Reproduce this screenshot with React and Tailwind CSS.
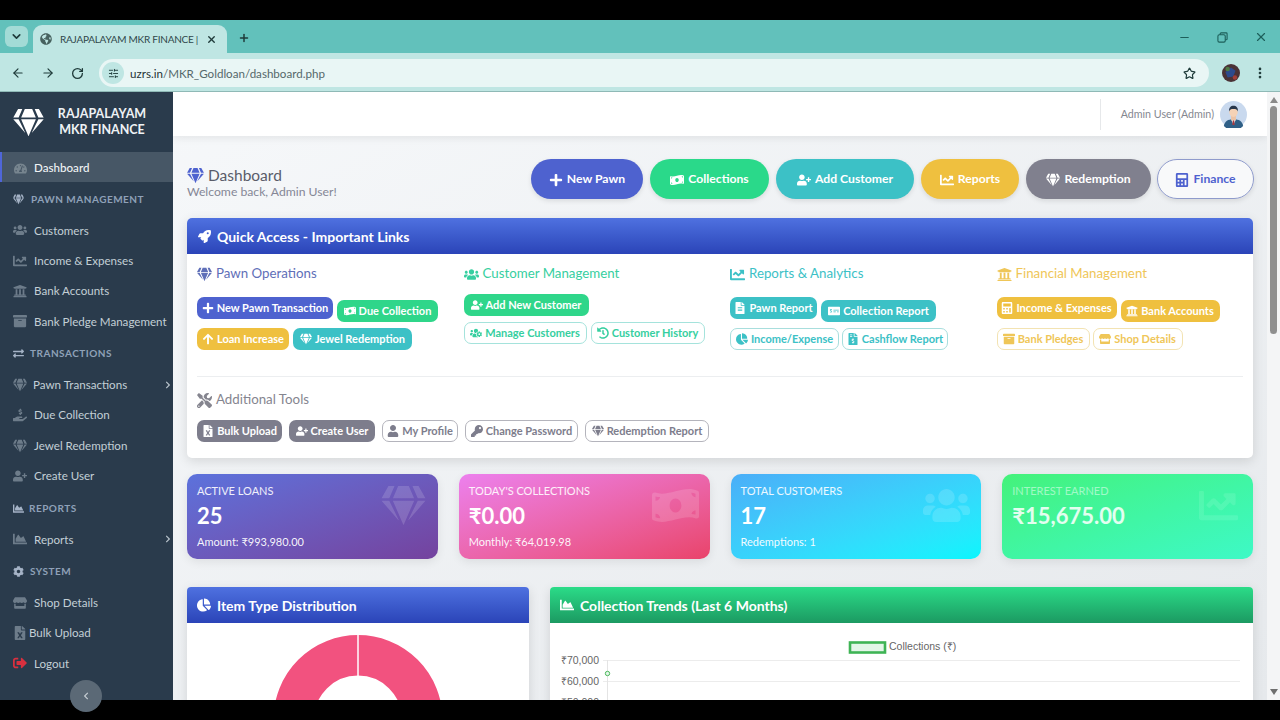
import {
  FaArchive, FaArrowUp, FaCalculator, FaChartArea, FaChartLine, FaChartPie, FaChevronLeft, FaChevronRight,
  FaCog, FaExchangeAlt, FaFileAlt, FaFileExcel, FaFileInvoiceDollar, FaGem, FaGlobeAmericas, FaHandHoldingUsd,
  FaHistory, FaKey, FaMoneyBillWave, FaMoneyCheckAlt, FaPlus, FaRocket, FaSignOutAlt, FaStore, FaTachometerAlt,
  FaTools, FaUniversity, FaUser, FaUserPlus, FaUsers, FaUsersCog,
} from "react-icons/fa";
import { ArrowLeft, ArrowRight, ChevronDown, EllipsisVertical, Minus, Plus, RotateCw, SlidersHorizontal, Star, X } from "lucide-react";

const NAV = [
  { label: "Customers", icon: FaUsers },
  { label: "Income & Expenses", icon: FaChartLine },
  { label: "Bank Accounts", icon: FaUniversity },
  { label: "Bank Pledge Management", icon: FaArchive },
];

const TOP_BUTTONS = [
  { label: "New Pawn", icon: FaPlus, cls: "w-[112px] bg-[#4e62cf] text-white" },
  { label: "Collections", icon: FaMoneyBillWave, cls: "w-[119px] bg-[#2ad98a] text-white" },
  { label: "Add Customer", icon: FaUserPlus, cls: "w-[138px] bg-[#3cc1c6] text-white" },
  { label: "Reports", icon: FaChartLine, cls: "w-[98px] bg-[#efc03f] text-white" },
  { label: "Redemption", icon: FaGem, cls: "w-[125px] bg-[#80808e] text-white" },
  { label: "Finance", icon: FaCalculator, cls: "-ml-[1px] w-[97px] border border-[#8f9bcc] bg-white/60 text-[#4e62cf]" },
];

const PRIMARY = "bg-[#4e62cf] text-white";
const SUCCESS = "bg-[#2fd68a] text-white";
const INFO = "bg-[#3cc1c6] text-white";
const WARNING = "bg-[#efc03f] text-white";
const SECONDARY = "bg-[#7d7d8c] text-white";
const OUT_SUCCESS = "border border-[#a5e3dc] text-[#36cfa0] bg-white";
const OUT_INFO = "border border-[#a8dedd] text-[#3cc1c6] bg-white";
const OUT_WARNING = "border border-[#f3e3b2] text-[#efc658] bg-white";
const OUT_GREY = "border border-[#b4b4bc] text-[#7d7d8c] bg-white";

function Sidebar() {
  return (
    <aside className="relative w-[173px] shrink-0 whitespace-nowrap bg-[#2a3b4c] text-[11.6px] text-[#c3cfd6]">
      <div className="flex h-[60px] items-center pl-[13px]">
        <FaGem className="h-[27px] w-[31px] text-white" />
        <div className="w-[116px] text-center text-[12.5px] font-bold leading-[16px] text-[#eef2f5]">
          RAJAPALAYAM
          <br />
          MKR FINANCE
        </div>
      </div>
      <div className="flex h-[30px] items-center border-l-[2px] border-[#4f66d8] bg-[#475766] pl-[12px] pt-[2px] font-medium text-[#f0f3f5]">
        <FaTachometerAlt className="mr-[7px] h-[13px] w-[13px] text-[#77858f]" />
        Dashboard
      </div>
      <Section icon={FaGem} label="Pawn Management" />
      {NAV.map((n) => <NavItem key={n.label} {...n} />)}
      <Section icon={FaExchangeAlt} label="Transactions" gap="mr-[6px]" />
      <NavItem label="Pawn Transactions" icon={FaGem} box="w-[20px]" arrow />
      <NavItem label="Due Collection" icon={FaHandHoldingUsd} />
      <NavItem label="Jewel Redemption" icon={FaGem} />
      <NavItem label="Create User" icon={FaUserPlus} />
      <Section icon={FaChartArea} label="Reports" gap="mr-[5px]" />
      <NavItem label="Reports" icon={FaChartArea} arrow />
      <Section icon={FaCog} label="System" gap="mr-[6px]" />
      <NavItem label="Shop Details" icon={FaStore} />
      <NavItem label="Bulk Upload" icon={FaFileExcel} box="w-[16px]" />
      <NavItem label="Logout" icon={FaSignOutAlt} iconCls="text-[#d8303f]" />
      <button className="absolute left-[70px] top-[588px] flex h-[32px] w-[32px] items-start justify-center rounded-full bg-[#5b6976] pt-[12px] text-[#c5ccd2]">
        <FaChevronLeft className="h-[8px] w-[8px]" />
      </button>
    </aside>
  );
}

function Section({ icon: Icon, label, gap = "mr-[7px]" }) {
  return (
    <div className="flex h-[33px] items-center pl-[13px] pt-[1px] text-[10px] font-bold uppercase tracking-[0.5px] text-[#8fa1b8]">
      <Icon className={`h-[11px] w-[11px] text-[#a5b3c6] ${gap}`} />
      {label}
    </div>
  );
}

function NavItem({ label, icon: Icon, box = "w-[21px]", iconCls = "text-[#6d7c8a]", arrow }) {
  return (
    <div className="relative flex h-[30.4px] items-center pl-[13px]">
      <span className={`${box} shrink-0`}>
        <Icon className={`h-[14px] w-[14px] ${iconCls}`} />
      </span>
      {label}
      {arrow && <FaChevronRight className="absolute left-[165px] h-[8px] w-[6px] text-[#b8c3cb]" />}
    </div>
  );
}

function ChromeBar() {
  return (
    <div className="shrink-0 text-[#1f3b3a]">
      <div className="flex h-[33px] items-end bg-[#62c1bb]">
        <div className="mb-[6px] ml-[5px] flex h-[21px] w-[23px] items-center justify-center rounded-[6px] bg-[#a3dbd6]">
          <ChevronDown className="h-[13px] w-[13px]" strokeWidth={3} />
        </div>
        <div className="ml-[5px] flex h-[28px] w-[194px] items-center rounded-t-[9px] bg-[#bfe6e3] pl-[7px] text-[10px]">
          <FaGlobeAmericas className="h-[12px] w-[12px] text-[#47625f]" />
          <span className="ml-[8px] w-[135px] whitespace-nowrap tracking-[-0.25px] text-[#30474a]">RAJAPALAYAM MKR FINANCE |</span>
          <X className="ml-[11px] h-[11px] w-[11px]" strokeWidth={3} />
        </div>
        <Plus className="mb-[9px] ml-[11px] h-[12px] w-[12px]" strokeWidth={3} />
        <div className="mb-[9px] ml-auto flex items-center gap-[26px] pr-[12px] text-[#1d5f5a]">
          <Minus className="h-[13px] w-[13px]" />
          <svg viewBox="0 0 12 12" className="h-[11px] w-[11px]" fill="none" stroke="currentColor" strokeWidth="1.2">
            <rect x="1" y="3" width="8" height="8" rx="1.5" />
            <path d="M3.5 3V2a1 1 0 0 1 1-1H10a1 1 0 0 1 1 1v5.5a1 1 0 0 1-1 1H9" />
          </svg>
          <X className="h-[14px] w-[14px]" />
        </div>
      </div>
      <div className="flex h-[39px] items-center border-b border-[#8fb9b6] bg-[#bfe6e3] pt-[2px]">
        <ArrowLeft className="ml-[11px] h-[14px] w-[14px]" />
        <ArrowRight className="ml-[16px] h-[14px] w-[14px]" />
        <RotateCw className="ml-[16px] h-[13px] w-[13px]" strokeWidth={2.4} />
        <div className="ml-[15px] flex h-[28px] w-[1110px] items-center rounded-full bg-[#e9f6f5] pl-[3px]">
          <span className="flex h-[22px] w-[22px] items-center justify-center rounded-full bg-[#bfe6e3]">
            <SlidersHorizontal className="h-[11px] w-[11px]" />
          </span>
          <span className="ml-[6px] pt-[1px] text-[11.6px] text-[#55686a]">
            <span className="text-[#1f3335]">uzrs.in</span>/MKR_Goldloan/dashboard.php
          </span>
          <Star className="ml-auto mr-[13px] h-[13px] w-[13px]" strokeWidth={2.2} />
        </div>
        <svg viewBox="0 0 16 16" className="ml-[13px] h-[18px] w-[18px]">
          <circle cx="8" cy="8" r="8" fill="#4a3236" />
          <path d="M3 7l5-4 4 3-2 5-5 1z" fill="#2c4a8d" />
          <circle cx="5" cy="4.500" r="2" fill="#4d7a45" />
          <circle cx="11.500" cy="12" r="2" fill="#a03f3a" />
        </svg>
        <EllipsisVertical className="ml-[13px] h-[14px] w-[14px]" strokeWidth={2.6} />
      </div>
    </div>
  );
}

function Avatar() {
  return (
    <svg viewBox="0 0 28 28" className="h-[27px] w-[27px]">
      <circle cx="14" cy="14" r="14" fill="#c9d9ee" />
      <path d="M4 26c1-5 4-7 10-7s9 2 10 7a14 14 0 0 1-20 0z" fill="#2f5f86" />
      <path d="M11.500 19h5l-2.500 6z" fill="#f4f4f4" />
      <path d="M13.300 20h1.400l.5 5h-2.400z" fill="#a8383f" />
      <rect x="11.500" y="14" width="5" height="6" fill="#edc3a5" />
      <ellipse cx="14" cy="11.500" rx="4.400" ry="5" fill="#f5d2b6" />
      <path d="M9.400 11c-.4-4 1.800-6 4.600-6s5 2 4.600 6c-.8-2-2-2.600-4.600-2.600S10.200 9 9.400 11z" fill="#27364a" />
    </svg>
  );
}

function QButton({ label, icon: Icon, cls, w, mt = "" }) {
  return (
    <span className={`flex h-[22px] shrink-0 items-center justify-center gap-[3px] whitespace-nowrap rounded-[7px] text-[11px] font-bold ${cls} ${w} ${mt}`}>
      <Icon className="h-[12px] w-[12px] shrink-0" />
      {label}
    </span>
  );
}

function QHead({ icon: Icon, label, cls }) {
  return (
    <div className={`flex h-[20px] items-center gap-[4px] pt-[2px] text-[13.3px] ${cls}`}>
      <Icon className="h-[15px] w-[15px]" />
      {label}
    </div>
  );
}

function QuickAccess() {
  return (
    <div className="mt-[19px] rounded-[5px] bg-white shadow-[0_3px_12px_rgba(0,0,0,0.12)]">
      <div className="flex h-[36px] items-center gap-[6px] rounded-t-[5px] bg-gradient-to-b from-[#4f71e0] to-[#2b44b8] pl-[11px] text-[14px] font-bold text-white">
        <FaRocket className="h-[13px] w-[13px]" />
        Quick Access - Important Links
      </div>
      <div className="grid grid-cols-4">
        <div className="pl-[10px] pt-[9px]">
          <QHead icon={FaGem} label="Pawn Operations" cls="text-[#5f6fb8]" />
          <div className="mt-[14px] flex gap-[4px]">
            <QButton label="New Pawn Transaction" icon={FaPlus} cls={PRIMARY} w="w-[136px]" />
            <QButton label="Due Collection" icon={FaMoneyBillWave} cls={SUCCESS} w="w-[101px]" mt="mt-[3px]" />
          </div>
          <div className="mt-[6px] flex gap-[4px]">
            <QButton label="Loan Increase" icon={FaArrowUp} cls={WARNING} w="w-[92px]" />
            <QButton label="Jewel Redemption" icon={FaGem} cls={INFO} w="w-[119px]" />
          </div>
        </div>
        <div className="pl-[10px] pt-[9px]">
          <QHead icon={FaUsers} label="Customer Management" cls="text-[#36cfa0]" />
          <div className="mt-[11px] flex gap-[4px]">
            <QButton label="Add New Customer" icon={FaUserPlus} cls={SUCCESS} w="w-[125px]" />
          </div>
          <div className="mt-[6px] flex gap-[4px]">
            <QButton label="Manage Customers" icon={FaUsersCog} cls={OUT_SUCCESS} w="w-[123px]" />
            <QButton label="Customer History" icon={FaHistory} cls={OUT_SUCCESS} w="w-[114px]" />
          </div>
        </div>
        <div className="pl-[10px] pt-[9px]">
          <QHead icon={FaChartLine} label="Reports & Analytics" cls="text-[#3cc1c6]" />
          <div className="mt-[14px] flex gap-[4px]">
            <QButton label="Pawn Report" icon={FaFileAlt} cls={INFO} w="w-[87px]" />
            <QButton label="Collection Report" icon={FaMoneyCheckAlt} cls={INFO} w="w-[115px]" mt="mt-[3px]" />
          </div>
          <div className="mt-[6px] flex gap-[3px]">
            <QButton label="Income/Expense" icon={FaChartPie} cls={OUT_INFO} w="w-[109px]" />
            <QButton label="Cashflow Report" icon={FaFileInvoiceDollar} cls={OUT_INFO} w="w-[106px]" />
          </div>
        </div>
        <div className="pl-[10px] pt-[9px]">
          <QHead icon={FaUniversity} label="Financial Management" cls="text-[#efc658]" />
          <div className="mt-[14px] flex gap-[4px]">
            <QButton label="Income & Expenses" icon={FaCalculator} cls={WARNING} w="w-[120px]" />
            <QButton label="Bank Accounts" icon={FaUniversity} cls={WARNING} w="w-[99px]" mt="mt-[3px]" />
          </div>
          <div className="mt-[6px] flex gap-[3px]">
            <QButton label="Bank Pledges" icon={FaArchive} cls={OUT_WARNING} w="w-[93px]" />
            <QButton label="Shop Details" icon={FaStore} cls={OUT_WARNING} w="w-[90px]" />
          </div>
        </div>
      </div>
      <div className="mx-[10px] mt-[26px] border-t border-[#eceef0]" />
      <div className="px-[10px] pb-[16px] pt-[12px]">
        <QHead icon={FaTools} label="Additional Tools" cls="text-[#85858f]" />
        <div className="mt-[11px] flex gap-[7px]">
          <QButton label="Bulk Upload" icon={FaFileExcel} cls={SECONDARY} w="w-[85px]" />
          <QButton label="Create User" icon={FaUserPlus} cls={SECONDARY} w="w-[86px]" />
          <QButton label="My Profile" icon={FaUser} cls={OUT_GREY} w="w-[76px]" />
          <QButton label="Change Password" icon={FaKey} cls={OUT_GREY} w="w-[113px]" />
          <QButton label="Redemption Report" icon={FaGem} cls={OUT_GREY} w="w-[124px]" />
        </div>
      </div>
    </div>
  );
}

function StatCard({ cls, labelCls = "text-white/90", valueCls = "text-white", label, value, foot, icon: Icon, iconCls }) {
  return (
    <div className={`relative h-[85px] rounded-[10px] pl-[10px] pt-[10px] shadow-[0_3px_10px_rgba(0,0,0,0.08)] ${cls}`}>
      <div className={`text-[11px] uppercase leading-[14px] ${labelCls}`}>{label}</div>
      <div className={`mt-[4px] text-[22px] font-bold leading-[28px] ${valueCls}`}>{value}</div>
      <div className="mt-[5px] text-[11px] leading-[14px] text-white/95">{foot}</div>
      <Icon className={`absolute right-[11px] top-[12px] h-[39px] w-[47px] ${iconCls}`} />
    </div>
  );
}

function ChartCard({ head, icon: Icon, title, children }) {
  return (
    <div className="overflow-hidden rounded-t-[4px] bg-white shadow-[0_3px_12px_rgba(0,0,0,0.12)]">
      <div className={`flex h-[36px] items-center gap-[6px] pl-[10px] text-[14px] font-bold text-white ${head}`}>
        <Icon className="h-[14px] w-[14px]" />
        {title}
      </div>
      {children}
    </div>
  );
}

export default function App() {
  return (
    <div className="flex h-screen flex-col overflow-hidden bg-black font-['Lato',sans-serif]">
      <div className="h-[20px] shrink-0" />
      <ChromeBar />
      <div className="flex min-h-0 flex-1 bg-[#eef1f4]">
        <Sidebar />
        <main className="min-w-0 flex-1 overflow-hidden bg-gradient-to-br from-[#f6f8fa] to-[#e6e9ec]">
          <header className="flex h-[44px] items-center justify-end bg-white pr-[20px] shadow-[0_2px_8px_rgba(0,0,0,0.08)]">
            <div className="flex h-[31px] items-center gap-[6px] border-l border-[#e6e8ea] pl-[20px] text-[10.7px] text-[#85878f]">
              Admin User (Admin)
              <Avatar />
            </div>
          </header>
          <div className="px-[14px]">
            <div className="mt-[23px] flex items-center justify-between">
              <div className="pt-[6px]">
                <div className="flex items-center gap-[4px] text-[15.500px] leading-[20px] text-[#5a5c69]">
                  <FaGem className="h-[15px] w-[17px] text-[#4e62cf]" />
                  Dashboard
                </div>
                <div className="text-[12.2px] leading-[14px] text-[#858796]">Welcome back, Admin User!</div>
              </div>
              <div className="-mr-[1px] flex gap-[7px]">
                {TOP_BUTTONS.map((b) => (
                  <span key={b.label} className={`flex h-[40px] items-center justify-center gap-[4px] rounded-full pt-[1px] text-[12.2px] font-bold shadow-[0_2px_5px_rgba(0,0,0,0.1)] ${b.cls}`}>
                    <b.icon className="h-[14px] w-[14px]" />
                    {b.label}
                  </span>
                ))}
              </div>
            </div>
            <QuickAccess />
            <div className="mt-[16px] grid grid-cols-4 gap-[21px]">
              <StatCard cls="bg-gradient-to-br from-[#5b72dc] to-[#74429e]" label="Active Loans" value="25" foot="Amount: ₹993,980.00" icon={FaGem} iconCls="text-white/15" />
              <StatCard cls="bg-gradient-to-br from-[#ec80ee] to-[#e9436a]" label="Today's Collections" value="₹0.00" foot="Monthly: ₹64,019.98" icon={FaMoneyBillWave} iconCls="text-white/15" />
              <StatCard cls="bg-gradient-to-br from-[#4aaef8] to-[#06f6fd]" label="Total Customers" value="17" foot="Redemptions: 1" icon={FaUsers} iconCls="text-white/15" />
              <StatCard cls="bg-gradient-to-br from-[#44f27a] to-[#3ef9c6]" labelCls="text-white/50" valueCls="text-white/85" label="Interest Earned" value="₹15,675.00" foot="" icon={FaChartLine} iconCls="text-white/10" />
            </div>
            <div className="mt-[28px] grid grid-cols-[342px_1fr] gap-[21px]">
              <ChartCard head="bg-gradient-to-b from-[#4f71e0] to-[#2b44b8]" icon={FaChartPie} title="Item Type Distribution">
                <svg viewBox="0 0 342 100" className="block h-[100px] w-[342px]">
                  <circle cx="171" cy="96.500" r="64.250" fill="none" stroke="#f2527f" strokeWidth="40.500" />
                  <line x1="171" y1="11" x2="171" y2="53" stroke="#fff" strokeWidth="1.500" />
                </svg>
              </ChartCard>
              <ChartCard head="bg-gradient-to-b from-[#2bdc88] to-[#1c9a62]" icon={FaChartArea} title="Collection Trends (Last 6 Months)">
                <svg viewBox="0 0 703 100" className="block h-[100px] w-[703px] font-['Liberation_Sans',sans-serif] text-[10.500px]">
                  <rect x="300" y="19.500" width="35" height="10" fill="#e3f6e8" stroke="#3fb455" strokeWidth="2.600" />
                  <text x="339" y="27" fill="#666">Collections (₹)</text>
                  <path d="M53 37.500H690M53 58.500H690M53 79.500H690" stroke="#ececec" />
                  <path d="M57.500 37V100" stroke="#e4e4e4" />
                  <text x="49" y="40.500" fill="#666" textAnchor="end">₹70,000</text>
                  <text x="49" y="61.500" fill="#666" textAnchor="end">₹60,000</text>
                  <text x="49" y="83" fill="#666" textAnchor="end">₹50,000</text>
                  <circle cx="57.500" cy="50.500" r="2.200" fill="#e3f6e8" stroke="#4cb85c" />
                </svg>
              </ChartCard>
            </div>
          </div>
        </main>
        <div className="flex w-[13px] shrink-0 flex-col items-center justify-between bg-[#f4f5f6] py-[5px] text-[#7d7d7d]">
          <span className="h-0 w-0 border-x-[4px] border-b-[6px] border-x-transparent border-b-[#8a8a8a]" />
          <span className="mb-auto mt-[3px] h-[228px] w-[7px] rounded-full bg-[#8f8f8f]" />
          <span className="h-0 w-0 border-x-[4px] border-t-[6px] border-x-transparent border-t-[#6f6f6f]" />
        </div>
      </div>
      <div className="h-[20px] shrink-0" />
    </div>
  );
}
